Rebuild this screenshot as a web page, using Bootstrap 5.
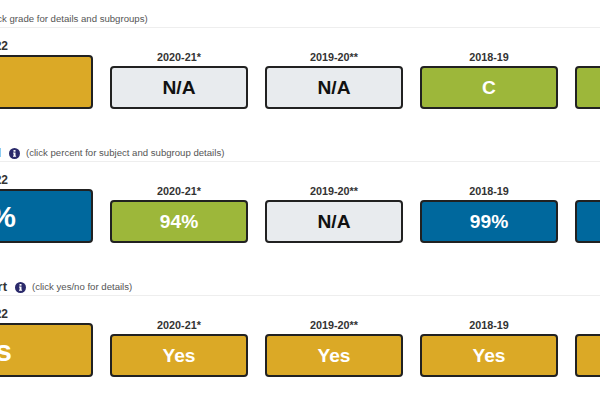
<!DOCTYPE html>
<html lang="en">
<head>
<meta charset="utf-8">
<title>Report card</title>
<link href="https://cdn.jsdelivr.net/npm/bootstrap@5.3.0/dist/css/bootstrap.min.css" rel="stylesheet">
<style>
html, body { height: 400px; overflow: hidden; }
body { background: #fff; font-family: "Liberation Sans", Arial, sans-serif; color: #333; }
.sheet { width: 900px; margin-left: -121px; padding-top: 10px; }
.rc-section { height: 134px; }
.rc-head { height: 16px; padding-top: 1px; box-sizing: content-box; border-bottom: 1px solid #eee; font-size: 9.6px; line-height: 16px; color: #555; }
.rc-title { font-size: 13px; font-weight: 700; color: #333; text-align: right; white-space: nowrap; }
.rc-t1 { width: 102px; }
.rc-t2 { width: 122px; }
.rc-t3 { width: 128px; }
.rc-info { width: 11px; height: 11px; margin: 0 6px 0 8px; flex: none; }
.rc-row { margin-top: 11px; gap: 17px; align-items: flex-end; }
.rc-col { width: 138px; flex: none; text-align: center; }
.rc-big { width: 214px; }
.rc-year { font-size: 10.8px; font-weight: 700; line-height: 14px; margin-bottom: 2px; color: #333; }
.rc-big .rc-year { font-size: 12px; }
.rc-box { height: 43px; border: 2px solid #212121; border-radius: 4px; font-size: 19.2px; font-weight: 700; line-height: 39px; color: #fff; }
.rc-big .rc-box { height: 54px; font-size: 30px; line-height: 51px; }
.rc-gold { background: #dba926; }
.rc-green { background: #9db73a; }
.rc-blue { background: #00689d; }
.rc-na { background: #e8ebee; color: #111; }
</style>
</head>
<body>
<div class="sheet">
  <section class="rc-section">
    <div class="rc-head d-flex align-items-center">
      <span class="rc-title rc-t1">Grade</span><span class="ms-1">(click grade for details and subgroups)</span>
    </div>
    <div class="rc-row d-flex">
      <div class="rc-col rc-big"><div class="rc-year">2021-22</div><div class="rc-box rc-gold">B</div></div>
      <div class="rc-col"><div class="rc-year">2020-21*</div><div class="rc-box rc-na">N/A</div></div>
      <div class="rc-col"><div class="rc-year">2019-20**</div><div class="rc-box rc-na">N/A</div></div>
      <div class="rc-col"><div class="rc-year">2018-19</div><div class="rc-box rc-green">C</div></div>
      <div class="rc-col"><div class="rc-year">2017-18</div><div class="rc-box rc-green">C</div></div>
    </div>
  </section>
  <section class="rc-section">
    <div class="rc-head d-flex align-items-center">
      <span class="rc-title rc-t2">Participation Level</span>
      <svg class="rc-info" viewBox="0 0 11 11"><circle cx="5.5" cy="5.5" r="5.5" fill="#2b2a6b"/><rect x="4.5" y="2" width="2" height="1.7" fill="#fff"/><path d="M4 4.5h2.5v3.2h.6v1H4v-1h.6V5.5H4z" fill="#fff"/></svg>
      <span>(click percent for subject and subgroup details)</span>
    </div>
    <div class="rc-row d-flex">
      <div class="rc-col rc-big"><div class="rc-year">2021-22</div><div class="rc-box rc-blue">98%</div></div>
      <div class="rc-col"><div class="rc-year">2020-21*</div><div class="rc-box rc-green">94%</div></div>
      <div class="rc-col"><div class="rc-year">2019-20**</div><div class="rc-box rc-na">N/A</div></div>
      <div class="rc-col"><div class="rc-year">2018-19</div><div class="rc-box rc-blue">99%</div></div>
      <div class="rc-col"><div class="rc-year">2017-18</div><div class="rc-box rc-blue">99%</div></div>
    </div>
  </section>
  <section class="rc-section">
    <div class="rc-head d-flex align-items-center">
      <span class="rc-title rc-t3">Family Support</span>
      <svg class="rc-info" viewBox="0 0 11 11"><circle cx="5.5" cy="5.5" r="5.5" fill="#2b2a6b"/><rect x="4.5" y="2" width="2" height="1.7" fill="#fff"/><path d="M4 4.5h2.5v3.2h.6v1H4v-1h.6V5.5H4z" fill="#fff"/></svg>
      <span>(click yes/no for details)</span>
    </div>
    <div class="rc-row d-flex">
      <div class="rc-col rc-big"><div class="rc-year">2021-22</div><div class="rc-box rc-gold">Yes</div></div>
      <div class="rc-col"><div class="rc-year">2020-21*</div><div class="rc-box rc-gold">Yes</div></div>
      <div class="rc-col"><div class="rc-year">2019-20**</div><div class="rc-box rc-gold">Yes</div></div>
      <div class="rc-col"><div class="rc-year">2018-19</div><div class="rc-box rc-gold">Yes</div></div>
      <div class="rc-col"><div class="rc-year">2017-18</div><div class="rc-box rc-gold">Yes</div></div>
    </div>
  </section>
</div>
<script src="https://cdn.jsdelivr.net/npm/bootstrap@5.3.0/dist/js/bootstrap.bundle.min.js"></script>
</body>
</html>
